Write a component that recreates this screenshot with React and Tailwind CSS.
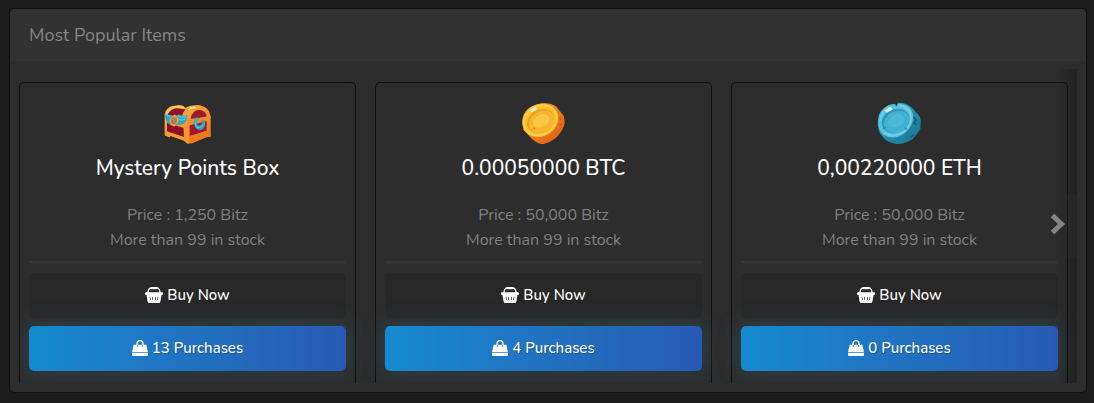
import React from "react";

const items = [
  { name: "Mystery Points Box", price: "1,250", purchases: 13, Art: ChestArt },
  { name: "0.00050000 BTC", price: "50,000", purchases: 4, Art: GoldCoinArt },
  { name: "0,00220000 ETH", price: "50,000", purchases: 0, Art: BlueCoinArt },
];

function ChestArt() {
  return (
    <svg viewBox="-30 -15 225 165" className="block h-[55px] w-[75px]" aria-hidden="true">
      <defs>
        <linearGradient id="chestGold" x1="0" y1="0" x2="1" y2="1">
          <stop offset="0" stopColor="#fbb847" />
          <stop offset="1" stopColor="#e8741f" />
        </linearGradient>
      </defs>
      <path d="M14 42 Q18 24 36 18 L58 15 Q70 16 76 23 Q92 15 114 16 Q138 18 147 34 Q152 44 152 62 L152 110 L138 112 L96 130 L82 130 L72 122 L32 108 L28 112 L14 106 Z" fill="url(#chestGold)" />
      <path d="M24 42 Q32 27 50 25 L76 28 Q68 38 65 52 L65 62 L24 50 Z" fill="#96102a" />
      <path d="M21 68 L72 84 L72 112 L21 96 Z" fill="#8e1029" />
      <path d="M92 56 Q96 36 110 31 Q128 26 138 42 L141 52 Z" fill="#a01a2a" />
      <path d="M89 76 L140 64 L140 92 L89 110 Z" fill="#a5152c" />
      <path d="M20 40 Q28 23 54 20 L72 23" fill="none" stroke="#ffc965" strokeWidth="5" />
      <path d="M76 66 Q75 42 92 28 Q104 19 122 22" fill="none" stroke="#f8a53c" strokeWidth="11" />
      <path d="M84 30 Q92 22 106 22" fill="none" stroke="#ffdf9a" strokeWidth="5" />
      <path d="M70 66 L84 64 L90 130 L82 131 L72 122 Z" fill="#f4972f" />
      <path d="M84 60 L152 47 L152 58 L84 73 Z" fill="#f18c2d" />
      <path d="M88 108 L150 89 L151 110 L138 112 L96 130 L88 129 Z" fill="#ea7b20" />
      <path d="M16 92 L72 111 L74 121 L32 107 L28 112 L15 106 Z" fill="#f59d35" />
      <path d="M14 40 Q23 47 34 44 L44 49 L56 43 Q68 50 82 46 Q82 62 72 70 Q60 76 52 74 L38 78 Q20 72 17 56 Z" fill="#27a5c6" />
      <path d="M16 43 L32 51 M54 48 Q66 54 79 50 M58 58 Q66 62 76 57" fill="none" stroke="#5ccbe0" strokeWidth="4" />
      <path d="M44 43 L56 55 Q58 70 42 80 Q25 70 29 57 Z" fill="#f3a03a" />
      <ellipse cx="42" cy="62" rx="9" ry="10" fill="#c6732b" />
      <path d="M42 54 Q48 62 42 70 Q35 62 42 54" fill="#35aecb" />
      <path d="M108 52 Q117 50 115 58 Q109 65 112 73 Q118 80 125 73 Q128 67 122 62 Q132 58 136 69 Q136 86 121 91 Q107 90 103 76 Q99 62 108 52 Z" fill="#27a5c6" />
      <path d="M109 58 Q102 74 112 82 Q121 86 130 72" fill="none" stroke="#4fc3db" strokeWidth="4" />
    </svg>
  );
}

function GoldCoinArt() {
  return (
    <svg viewBox="-12 0 225 165" className="block h-[55px] w-[75px]" aria-hidden="true">
      <defs>
        <linearGradient id="goldEdge" x1="0" y1="0" x2="1" y2="1">
          <stop offset="0" stopColor="#f7a324" />
          <stop offset="1" stopColor="#df5713" />
        </linearGradient>
        <linearGradient id="goldFace" x1="0" y1="0" x2="1" y2="1">
          <stop offset="0" stopColor="#ffc135" />
          <stop offset="1" stopColor="#f9bd2c" />
        </linearGradient>
      </defs>
      <path d="M37 77 Q39 39 84 27 Q118 20 138 34 L161 62 Q169 86 155 107 Q136 139 101 147 Q85 149 66 132 L40 104 Z" fill="url(#goldEdge)" />
      <ellipse cx="91" cy="76" rx="56" ry="48" transform="rotate(-31 91 76)" fill="url(#goldFace)" />
      <ellipse cx="91" cy="76" rx="51" ry="43" transform="rotate(-31 91 76)" fill="none" stroke="#fdd04a" strokeWidth="5" />
      <ellipse cx="92" cy="78" rx="43" ry="34" transform="rotate(-29 92 78)" fill="#eda21f" />
      <ellipse cx="95" cy="81" rx="40" ry="31" transform="rotate(-29 95 81)" fill="#f8b52f" />
      <ellipse cx="94" cy="77" rx="26" ry="18" transform="rotate(-25 94 77)" fill="#fdc644" />
      <path d="M61 45 L76 34 L82 42 L65 52 Z" fill="#fff3ce" />
      <path d="M149 67 L152 74 M148 89 L154 88" stroke="#c8500f" strokeWidth="4" />
      <path d="M70 98 L75 103" stroke="#df8b19" strokeWidth="5" />
    </svg>
  );
}

function BlueCoinArt() {
  return (
    <svg viewBox="-7 0 225 165" className="block h-[55px] w-[75px]" aria-hidden="true">
      <defs>
        <linearGradient id="blueEdge" x1="0" y1="0" x2="1" y2="1">
          <stop offset="0" stopColor="#35a9cd" />
          <stop offset="1" stopColor="#17718f" />
        </linearGradient>
      </defs>
      <path d="M40 79 Q41 46 73 30 L92 26 L96 34 L101 23 Q124 22 143 38 L160 57 Q172 68 169 88 L168 103 L145 133 Q120 148 98 147 Q72 144 57 128 Q39 111 40 79 Z" fill="url(#blueEdge)" />
      <path d="M42 80 Q42 47 73 31 L90 27 L96 37 L102 26 Q139 26 146 59 Q150 93 118 117 Q88 137 57 119 Q42 106 42 80 Z" fill="#56c3de" />
      <path d="M46 77 Q53 48 76 36 M104 31 Q136 34 140 66 Q140 91 118 110 Q88 131 60 114" fill="none" stroke="#70d0e6" strokeWidth="5" />
      <ellipse cx="94" cy="78" rx="43" ry="35" transform="rotate(-27 94 78)" fill="#2f97b9" />
      <ellipse cx="97" cy="81" rx="40" ry="32" transform="rotate(-27 97 81)" fill="#42b0d0" />
      <ellipse cx="96" cy="77" rx="26" ry="18" transform="rotate(-25 96 77)" fill="#4cb9d8" />
      <path d="M62 45 L78 35 L85 43 L68 53 Z" fill="#dcf7f6" />
      <path d="M149 66 L155 76 L149 84 L156 91 M139 126 L148 119" fill="none" stroke="#0d5873" strokeWidth="4" />
      <path d="M57 101 L65 96 M121 98 L128 104" stroke="#2f8dad" strokeWidth="4" />
    </svg>
  );
}

function BasketIcon() {
  return (
    <svg viewBox="0 0 54 48" className="h-4 w-[18px]" fill="currentColor" aria-hidden="true">
      <path d="M8 18 L11 8 Q13 3 19 3 H35 Q41 3 43 8 L46 18" fill="none" stroke="currentColor" strokeWidth="4" />
      <rect x="16" y="0" width="22" height="7" rx="3" />
      <rect x="0" y="16" width="54" height="8" rx="3" />
      <path
        fillRule="evenodd"
        d="M4 22 H50 L46 44 Q45 48 41 48 H13 Q9 48 8 44 Z M14 29 L15 39 H17 L16 29 Z M22 29 V39 H24 V29 Z M30 29 V39 H32 V29 Z M38 29 L37 39 H39 L40 29 Z"
      />
    </svg>
  );
}

function BagIcon() {
  return (
    <svg viewBox="0 0 48 48" className="h-4 w-4" fill="currentColor" aria-hidden="true">
      <path d="M15 20 V12 Q15 2 24 2 Q33 2 33 12 V20" fill="none" stroke="currentColor" strokeWidth="4" />
      <path d="M5 14 H43 L48 37 H0 Z" />
      <path d="M0 39 H48 V45 Q48 48 45 48 H3 Q0 48 0 45 Z" />
      <path d="M16 15 V20 M32 15 V20" stroke="#1c73c2" strokeWidth="3" />
    </svg>
  );
}

function ItemCard({ item }) {
  const { name, price, purchases, Art } = item;

  return (
    <article className="min-w-0 rounded-t-[5px] border border-b-0 border-[#111] px-[9px] pt-3 pb-3 text-center">
      <div className="flex justify-center">
        <Art />
      </div>
      <h3 className="mt-[5px] text-[21px] leading-[26px] font-medium text-white">{name}</h3>
      <div className="mt-[22px] text-base leading-[25px] text-[#808080]">
        <p>Price : {price} Bitz</p>
        <p>More than 99 in stock</p>
      </div>
      <hr className="mt-2 h-[3px] border-0 bg-linear-to-b from-[#383838] to-[#313131]" />
      <button
        type="button"
        className="mt-[9px] flex h-[45px] w-full items-center justify-center gap-1 rounded-[5px] bg-[#282828] pb-px text-[15px] font-medium text-white"
      >
        <BasketIcon />
        Buy Now
      </button>
      <button
        type="button"
        className="mt-2 flex h-[45px] w-full items-center justify-center gap-1 rounded-[5px] bg-linear-to-r from-[#148acf] to-[#2759b4] pb-px text-[15px] font-medium text-white shadow-[0_0_24px_rgba(48,130,170,0.28)] text-shadow-[1px_1px_1px_rgba(0,0,0,0.25)]"
      >
        <BagIcon />
        {purchases} Purchases
      </button>
    </article>
  );
}

function App() {
  return (
    <div className="min-h-screen bg-[#1b1b1b] pt-2 pr-[7px] pb-2 pl-[9px] font-[Nunito,Lato,sans-serif]">
      <section className="rounded-md border border-[#111] bg-[#2d2d2d]">
        <header className="rounded-t-[5px] bg-[#323232] px-[19px] py-[13px]">
          <h2 className="text-lg leading-[26px] text-[#858585]">Most Popular Items</h2>
        </header>

        <div className="px-[9px] pt-2 pb-[9px]">
          <div className="relative overflow-hidden">
            <div className="grid grid-cols-3 gap-[19px] pt-[13px] pr-[9px]">
              {items.map((item) => (
                <ItemCard key={item.name} item={item} />
              ))}
            </div>

            <div className="pointer-events-none absolute inset-y-0 right-0 w-5 bg-linear-to-r from-transparent to-black/25" />
            <button
              type="button"
              aria-label="Next items"
              className="absolute top-[126px] right-0 flex h-[62px] w-9 items-center justify-center bg-linear-to-r from-transparent to-[#2a2a2a]/60 pr-[3px] pb-1 text-[#858585]"
            >
              <svg viewBox="0 0 16 22" className="h-[22px] w-4" fill="none" stroke="currentColor" strokeWidth="5" aria-hidden="true">
                <path d="M2.5 2.5 L11.5 11 L2.5 19.5" />
              </svg>
            </button>
          </div>
        </div>
      </section>
    </div>
  );
}

export default App;
